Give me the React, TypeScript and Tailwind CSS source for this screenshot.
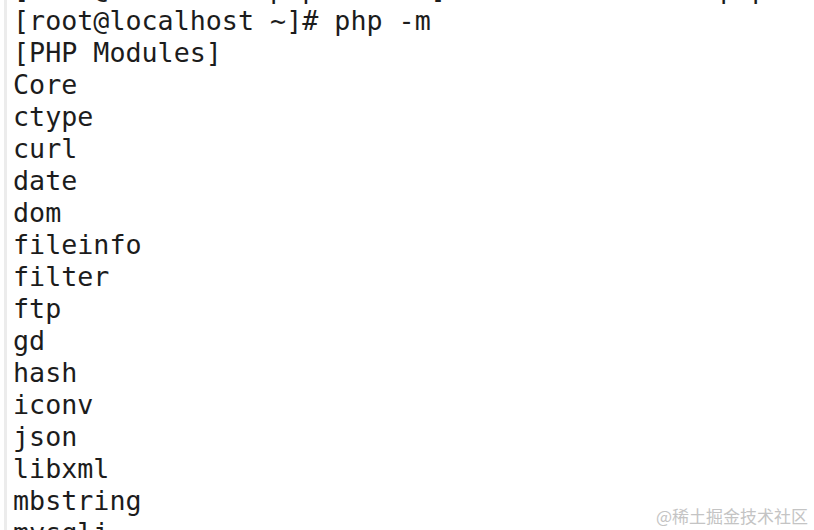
const lines = [
  "[root@localhost php-7.4.33]# /usr/local/bin/php -v",
  "[root@localhost ~]# php -m",
  "[PHP Modules]",
  "Core",
  "ctype",
  "curl",
  "date",
  "dom",
  "fileinfo",
  "filter",
  "ftp",
  "gd",
  "hash",
  "iconv",
  "json",
  "libxml",
  "mbstring",
  "mysqli",
];

export default function App() {
  return (
    <div className="relative w-[814px] h-[530px] overflow-hidden bg-white">
      <div className="flex h-full">
        <div className="w-[4px] shrink-0" />
        <div className="w-[3px] shrink-0 bg-[#ececec]" />
        <div
          className="-mt-[27px] pl-[6px] text-[26.7px] leading-[32px] text-[#1c1c1c] whitespace-pre"
          style={{ fontFamily: '"DejaVu Sans Mono", monospace' }}
        >
          {lines.map((line, i) => (
            <div key={i}>{line}</div>
          ))}
        </div>
      </div>
      {/* 水印 */}
      <div
        className="absolute right-[6px] bottom-[6px] text-[17px] leading-none text-[#c4c4c4]"
        style={{ fontFamily: '"Noto Sans CJK SC", "Noto Sans", sans-serif' }}
      >
        @稀土掘金技术社区
      </div>
    </div>
  );
}
